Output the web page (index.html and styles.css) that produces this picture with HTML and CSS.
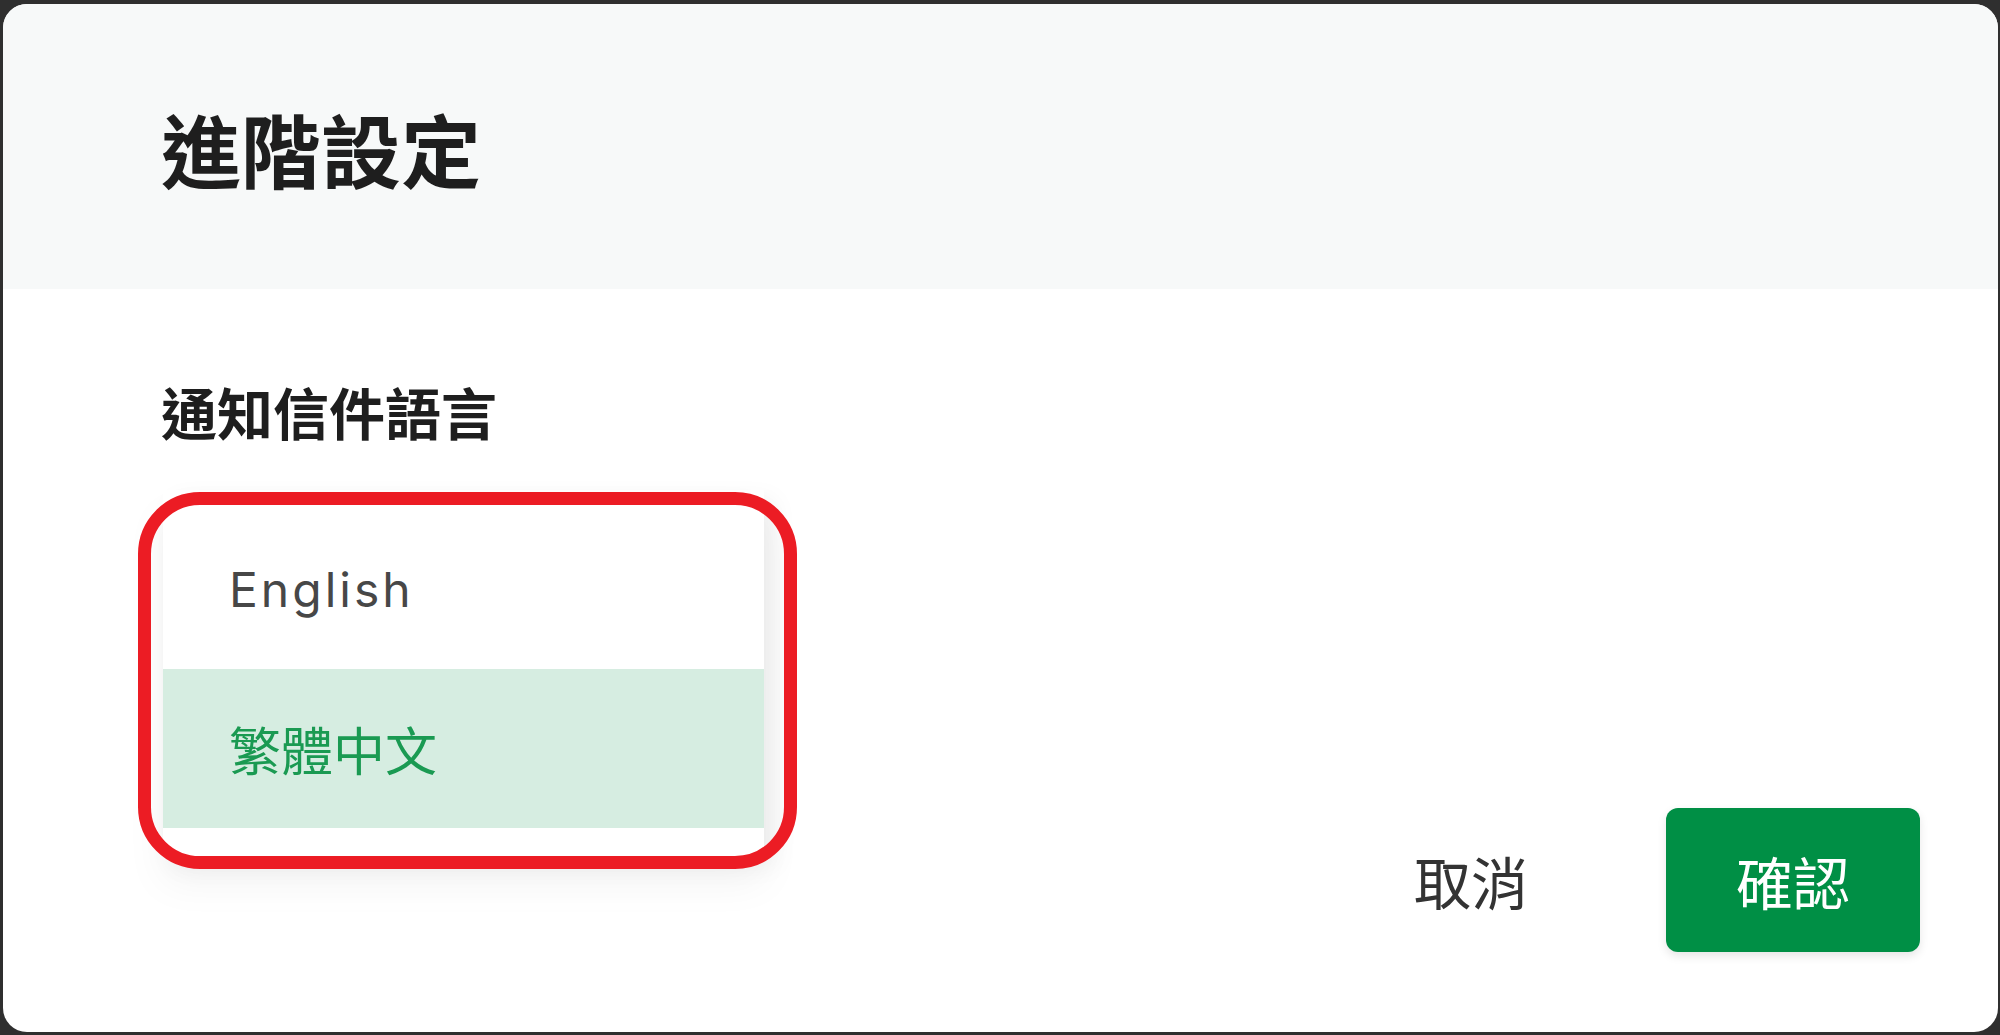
FILE: index.html
```html
<!DOCTYPE html>
<html lang="zh-Hant">
<head>
<meta charset="utf-8">
<title>進階設定</title>
<link rel="stylesheet" href="styles.css">
</head>
<body>
<div class="dialog">
  <header class="dialog-header">
    <h1 class="title">進階設定</h1>
  </header>
  <main class="dialog-body">
    <div class="field">
      <div class="field-label">通知信件語言</div>
      <ul class="menu">
        <li class="option option-en">English</li>
        <li class="option option-selected">繁體中文</li>
      </ul>
      <div class="highlight"></div>
    </div>
  </main>
  <footer class="dialog-footer">
    <button class="btn btn-text">取消</button>
    <button class="btn btn-primary">確認</button>
  </footer>
</div>
</body>
</html>
```
FILE: styles.css
```css
html, body {
  margin: 0;
  height: 100%;
}
body {
  box-sizing: border-box;
  height: 1035px;
  overflow: hidden;
  padding: 4px 2px 3px 3px;
  background: #2f2f2f;
  display: flex;
  font-family: "Noto Sans CJK TC", "Noto Sans", sans-serif;
}
.dialog {
  flex: 1;
  display: flex;
  flex-direction: column;
  background: #ffffff;
  border-radius: 24px;
  overflow: hidden;
}
.dialog-header {
  flex: none;
  height: 285px;
  display: flex;
  align-items: center;
  padding-left: 158px;
  background: #f7f9f9;
}
.title {
  margin: 0;
  font-family: "Noto Sans CJK TC", sans-serif;
  font-weight: 700;
  font-size: 80px;
  line-height: 1;
  color: #1e1e1e;
}
.dialog-body {
  flex: 1;
  padding: 94px 0 0 158px;
}
.field {
  position: relative;
}
.field-label {
  font-family: "Noto Sans CJK TC", sans-serif;
  font-weight: 700;
  font-size: 56px;
  line-height: 1;
  color: #1e1e1e;
}
.menu {
  position: absolute;
  left: 2px;
  top: 107px;
  width: 601px;
  margin: 0;
  padding: 20px 0 28px;
  list-style: none;
  background: #ffffff;
  box-shadow: 10px 10px 24px rgba(0, 0, 0, 0.06), 0 26px 40px rgba(0, 0, 0, 0.05);
  z-index: 2;
}
.option {
  height: 159px;
  display: flex;
  align-items: center;
  padding-left: 66px;
  line-height: 1;
}
.option-en {
  font-family: "Inter", "Open Sans", sans-serif;
  font-size: 48px;
  letter-spacing: 3px;
  color: #474747;
}
.option-selected {
  background: #d6ede1;
  font-family: "Noto Sans CJK TC", sans-serif;
  font-size: 52px;
  color: #1a9a52;
}
.highlight {
  position: absolute;
  left: -23px;
  top: 109px;
  width: 659px;
  height: 377px;
  box-sizing: border-box;
  border: 13px solid #ec1c24;
  border-radius: 62px;
  z-index: 3;
}
.dialog-footer {
  flex: none;
  display: flex;
  justify-content: flex-end;
  gap: 68px;
  padding: 0 78px 80px 0;
}
.btn {
  height: 144px;
  padding: 0 70px;
  border: none;
  border-radius: 12px;
  font-family: "Noto Sans CJK TC", sans-serif;
  font-weight: 400;
  font-size: 57px;
  line-height: 1;
  cursor: pointer;
}
.btn-text {
  background: transparent;
  color: #333333;
}
.btn-primary {
  background: #008f45;
  color: #ffffff;
  box-shadow: 0 4px 10px rgba(0, 0, 0, 0.1);
}
```
